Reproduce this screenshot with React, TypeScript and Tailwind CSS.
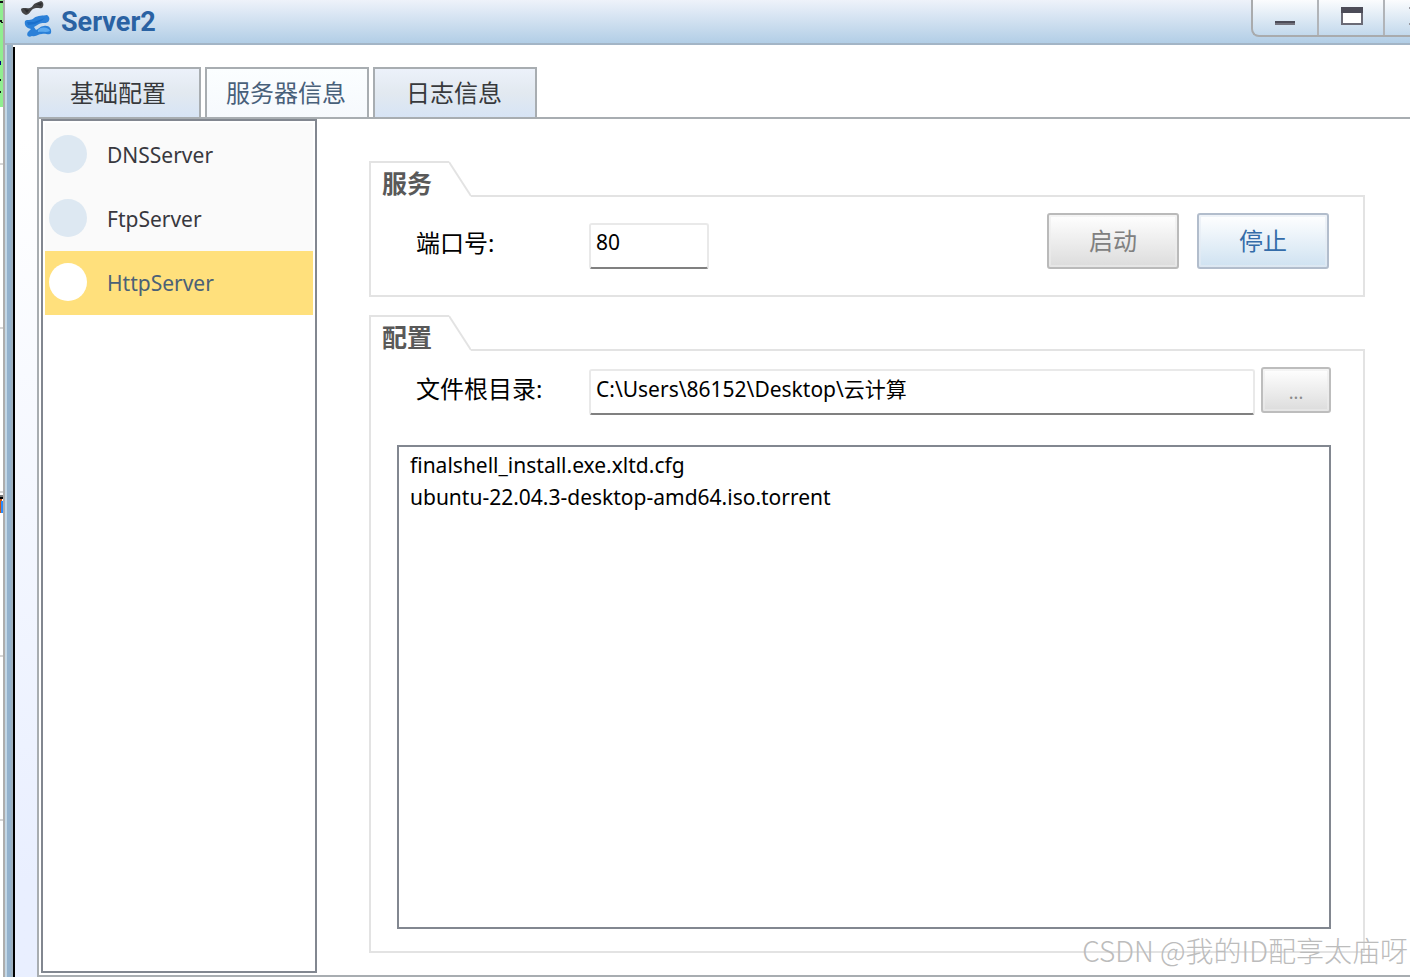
import { useState } from "react";
import type { ReactNode } from "react";

const TABS = ["基础配置", "服务器信息", "日志信息"];
const SERVERS = ["DNSServer", "FtpServer", "HttpServer"];
const FILES = ["finalshell_install.exe.xltd.cfg", "ubuntu-22.04.3-desktop-amd64.iso.torrent"];

const inputClass =
  "h-[46px] rounded-[3px] border-2 border-[#e9e9e9] border-b-[#808080] bg-white px-[5px] pb-2 text-[21px] text-black outline-none";

function Logo() {
  return (
    <svg className="h-10 w-8 shrink-0" viewBox="0 0 32 40" aria-hidden="true">
      <path
        d="M0 9 C2 7 6 9 9 8 C12 7 12 4 15 3 L20 1 C23 2 23 6 21 8 C18 9 16 7 12 9 C9 11 9 14 5 15 C2 14 0 12 0 9Z"
        fill="#444446"
      />
      <path d="M3 9 L8 10 L6 13Z M15 4 L21 3 L20 6Z" fill="#2c2c2e" />
      <path
        d="M4 21 C6 19 10 21 13 18 C17 15 22 16 26 15 C29 17 29 20 27 22 C24 24 21 22 18 24 L13 27 L15 30 C18 29 19 26 23 26 C28 25 31 29 30 33 C28 36 25 33 21 34 C17 34 16 37 11 36 C7 38 5 35 7 32 L10 29 C5 28 3 25 4 21Z"
        fill="#2b80d8"
      />
      <path d="M17 30 C20 26 28 27 29 31 C25 33 21 31 17 32Z" fill="#5caaf0" />
      <path d="M6 22 L13 22 L24 18 L20 21 L14 24 L7 25Z" fill="#1b70cc" />
    </svg>
  );
}

function WindowControls() {
  return (
    <div className="flex h-[37px] shrink-0 overflow-hidden rounded-bl-lg border-b-2 border-l-2 border-[#a9abad] bg-linear-to-b from-[#fbfcfe] to-[#c3d9ec]">
      <button type="button" aria-label="最小化" className="flex w-16 justify-center">
        <svg className="h-[35px] w-8" viewBox="0 0 32 35">
          <path d="M6 21h20v2H6z" fill="#4c4c58" />
          <path d="M6 23h20v2H6z" fill="#72727c" />
        </svg>
      </button>
      <button type="button" aria-label="最大化" className="flex w-[66px] justify-center border-l-2 border-[#b1b4b8]">
        <svg className="h-[35px] w-8" viewBox="0 0 32 35">
          <path d="M7 8h20v16H7z" fill="#fff" stroke="#6b6b76" strokeWidth="2" />
          <path d="M6 7h22v6H6z" fill="#4c4c58" />
        </svg>
      </button>
      <button type="button" aria-label="关闭" className="flex w-[27px] justify-end border-l-2 border-[#b1b4b8]">
        <svg className="h-[35px] w-1" viewBox="0 0 4 35">
          <path d="M3 7h1v2H3zM3 23h1v2H3z" fill="#9a9aa2" />
        </svg>
      </button>
    </div>
  );
}

/* Lo que asoma de la ventana de detrás */
function BackgroundEdge() {
  return (
    <div className="flex w-[3px] shrink-0 flex-col bg-white" aria-hidden="true">
      <svg className="h-[107px] w-[3px]" viewBox="0 0 3 107">
        <path d="M0 0h3v107H0z" fill="#90ee90" />
        <path d="M0 1h3v2H0zM0 20h2v2H0zM1 22h2v1H1zM0 79h1v2H0zM0 91h1v2H0z" fill="#111" />
        <path d="M0 61h1v4H0z" fill="#000080" />
      </svg>
      <div className="mt-14 h-[2px] bg-[#d5d5d5]" />
      <div className="mt-[162px] h-[2px] bg-[#d5d5d5]" />
      <div className="mt-[162px] h-[2px] bg-[#d5d5d5]" />
      <svg className="mt-[2px] h-[18px] w-[3px]" viewBox="0 0 3 18">
        <path d="M0 0h3v2H0z" fill="#777" />
        <path d="M0 2h3v2H0z" fill="#000" />
        <path d="M0 4h2v14H0z" fill="#c8591c" />
        <path d="M1 6h2v12H1z" fill="#2a8cff" />
      </svg>
      <div className="mt-[142px] h-[2px] bg-[#d5d5d5]" />
      <div className="mt-[162px] h-[2px] bg-[#d5d5d5]" />
    </div>
  );
}

interface GroupProps {
  title: string;
  className?: string;
  children: ReactNode;
}

function Group({ title, className = "", children }: GroupProps) {
  return (
    <section className={`flex flex-col ${className}`}>
      <div className="flex h-9 shrink-0">
        <h2 className="flex w-20 items-center border-l-2 border-t-2 border-[#e3e3e3] pl-[11px] pt-[6px] text-[25px] font-bold leading-8 whitespace-nowrap text-[#595959]">
          {title}
        </h2>
        <svg className="h-9 w-[22px]" viewBox="0 0 22 36" fill="none">
          <path d="M0 1 L22 35" stroke="#e3e3e3" strokeWidth="2" />
        </svg>
        <div className="flex-1 border-b-2 border-[#e3e3e3]" />
      </div>
      <div className="flex flex-1 flex-col border-x-2 border-b-2 border-[#e3e3e3]">{children}</div>
    </section>
  );
}

export default function App() {
  const [tab, setTab] = useState(1);
  const [server, setServer] = useState(2);
  const [port, setPort] = useState("80");
  const [root, setRoot] = useState("C:\\Users\\86152\\Desktop\\云计算");

  return (
    <div className="relative flex h-screen overflow-hidden bg-white font-['Noto_Sans','Noto_Sans_CJK_SC',sans-serif]">
      <BackgroundEdge />
      <div className="flex min-w-0 flex-1 flex-col border-l-2 border-[#adadad]">
        <header className="flex h-[45px] shrink-0 justify-between border-b-2 border-[#a3b5c6] bg-linear-to-b from-[#eef2fa] to-[#b2cee6]">
          <div className="flex items-start pl-4">
            <Logo />
            <h1 className="pl-2 font-['Roboto',sans-serif] text-[27px] font-bold leading-[45px] text-[#2a62a3]">
              Server2
            </h1>
          </div>
          <WindowControls />
        </header>

        <div className="flex min-h-0 flex-1 border-l-2 border-[#c3d7e6]">
          <div className="w-1 shrink-0 bg-[#94b2cd]" />
          <div className="w-[2px] shrink-0 bg-[#9db0c0]" />
          <div className="mt-[2px] w-[2px] shrink-0 bg-black" />
          <main className="flex min-w-0 flex-1 flex-col bg-linear-to-b from-white from-10% to-[#e9efff] to-90% pl-[22px]">
            <div className="-ml-[22px] bg-white pl-[22px] pt-[22px]">
              <div role="tablist" className="flex h-[50px] gap-1">
                {TABS.map((name, i) => (
                  <button
                    key={name}
                    type="button"
                    role="tab"
                    aria-selected={tab === i}
                    onClick={() => setTab(i)}
                    className={`w-[164px] border-x-2 border-t-2 border-[#a8adb1] pr-[2px] text-2xl ${
                      tab === i
                        ? "bg-linear-to-b from-[#fbfeff] to-[#f6f9fd] text-[#48607a]"
                        : "bg-linear-to-b from-[#ecf1fa] via-[#e2e9f0] to-[#d7e4f5] text-[#37393c]"
                    }`}
                  >
                    {name}
                  </button>
                ))}
              </div>
            </div>

            <div className="flex min-h-0 flex-1 border-y-2 border-l-2 border-[#a8adb1] bg-white pb-[2px] pl-[2px]">
              <ul className="w-[276px] shrink-0 border-2 border-[#828790] p-[2px]">
                {SERVERS.map((name, i) => (
                  <li key={name}>
                    <button
                      type="button"
                      onClick={() => setServer(i)}
                      className={`flex h-16 w-full items-center gap-5 pb-[2px] pl-1 text-[21px] ${
                        server === i ? "bg-[#ffe07c] text-[#4b6176]" : "bg-[#fafafa] text-[#38383e]"
                      }`}
                    >
                      <span className={`size-[38px] rounded-full ${server === i ? "bg-white" : "bg-[#dde8f2]"}`} />
                      <span className="pt-[2px] leading-8">{name}</span>
                    </button>
                  </li>
                ))}
              </ul>

              <div className="flex min-w-0 flex-1 flex-col gap-[18px] pb-5 pl-[52px] pr-[45px] pt-[42px]">
                <Group title="服务">
                  <div className="flex items-end pb-[26px] pl-[45px] pr-[34px] pt-4">
                    <label htmlFor="port" className="h-[46px] w-[173px] text-2xl leading-10">
                      端口号:
                    </label>
                    <input
                      id="port"
                      value={port}
                      onChange={(e) => setPort(e.target.value)}
                      className={`w-[120px] ${inputClass}`}
                    />
                    <div className="ml-auto flex gap-[18px]">
                      <button
                        type="button"
                        disabled
                        className="h-14 w-[132px] rounded-[3px] border-2 border-[#bababa] bg-linear-to-b from-white to-[#dcdcdc] text-2xl text-[#808080] inset-ring-2 inset-ring-[#ececec]/60"
                      >
                        启动
                      </button>
                      <button
                        type="button"
                        className="h-14 w-[132px] rounded-[3px] border-2 border-[#b2bdcc] bg-linear-to-b from-white to-[#cfe2f1] text-2xl text-[#346ca9] inset-ring-2 inset-ring-[#e4ebf4]/60"
                      >
                        停止
                      </button>
                    </div>
                  </div>
                </Group>

                <Group title="配置" className="min-h-0 flex-1">
                  <div className="flex pl-[45px] pr-8 pt-4">
                    <label htmlFor="root" className="mt-[2px] h-[46px] w-[173px] shrink-0 text-2xl leading-10">
                      文件根目录:
                    </label>
                    <input
                      id="root"
                      value={root}
                      onChange={(e) => setRoot(e.target.value)}
                      className={`mt-[2px] min-w-0 flex-1 ${inputClass}`}
                    />
                    <button
                      type="button"
                      aria-label="浏览"
                      className="ml-[6px] h-[46px] w-[70px] rounded-[3px] border-2 border-[#bdbdbd] bg-linear-to-b from-white to-[#dcdcdc] pt-1 text-lg text-[#8a8a8a] inset-ring-2 inset-ring-[#ececec]/60"
                    >
                      ...
                    </button>
                  </div>
                  <ul className="mb-[22px] ml-[26px] mr-8 mt-[30px] flex-1 border-2 border-[#828790] px-[11px] pt-[2px] text-[21px] leading-8 text-black">
                    {FILES.map((file) => (
                      <li key={file}>{file}</li>
                    ))}
                  </ul>
                </Group>
              </div>
            </div>
          </main>
        </div>
      </div>

      <p className="pointer-events-none absolute bottom-[7px] right-[2px] font-['Noto_Sans_CJK_SC',sans-serif] text-[28px] font-light leading-10 text-[#bcbcbc]">
        CSDN @我的ID配享太庙呀
      </p>
    </div>
  );
}
